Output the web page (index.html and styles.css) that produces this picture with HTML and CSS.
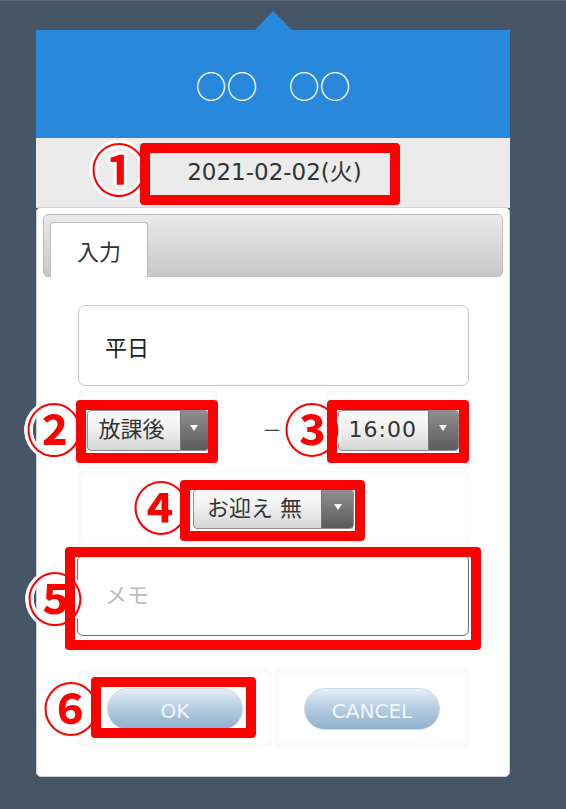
FILE: index.html
```html
<!DOCTYPE html>
<html lang="ja">
<head>
<meta charset="utf-8">
<title>入力</title>
<link rel="stylesheet" href="styles.css">
</head>
<body>
<div class="stage">
  <div class="page">
    <div class="pointer"></div>
    <div class="dialog">
      <div class="header">○○　○○</div>
      <div class="dateband"><span class="date">2021-02-02(火)</span></div>
      <div class="card">
        <div class="tabbar"><div class="tab">入力</div></div>
        <div class="form">
          <div class="dayfield">平日</div>
          <div class="timerow">
            <div class="cell">
              <div class="select s-period"><span class="select-label">放課後</span><span class="select-arrow"></span></div>
            </div>
            <div class="cell cell-mid"><span class="dash">－</span></div>
            <div class="cell">
              <div class="select s-time"><span class="select-label">16:00</span><span class="select-arrow"></span></div>
            </div>
          </div>
          <div class="pickuprow">
            <div class="select s-pickup"><span class="select-label">お迎え 無</span><span class="select-arrow"></span></div>
          </div>
          <div class="memo"><span class="placeholder">メモ</span></div>
          <div class="btnrow">
            <div class="cell"><button class="btn">OK</button></div>
            <div class="cell"><button class="btn">CANCEL</button></div>
          </div>
        </div>
      </div>
    </div>
  </div>
  <div class="annotations">
    <span class="badge b1">①</span>
    <span class="badge b2">②</span>
    <span class="badge b3">③</span>
    <span class="badge b4">④</span>
    <span class="badge b5">⑤</span>
    <span class="badge b6">⑥</span>
    <div class="mark m1"></div>
    <div class="mark m2"></div>
    <div class="mark m3"></div>
    <div class="mark m4"></div>
    <div class="mark m5"></div>
    <div class="mark m6"></div>
  </div>
</div>
</body>
</html>
```

FILE: styles.css
```css
* { box-sizing: border-box; }

html, body {
  margin: 0;
  padding: 0;
  background: #475667;
}

body {
  font-family: "DejaVu Sans", "Noto Sans CJK JP", sans-serif;
  color: #333;
}

.stage {
  position: relative;
  width: 566px;
  height: 809px;
  overflow: hidden;
  border-top: 1px solid #5c6876;
}

.page {
  padding-top: 10px;
  padding-left: 36px;
  width: 510px;
}

.pointer {
  width: 0;
  height: 0;
  margin-left: 219px;
  border-left: 18px solid transparent;
  border-right: 19px solid transparent;
  border-bottom: 19px solid #2888dc;
}

.dialog {
  width: 474px;
}

.header {
  height: 108px;
  background: #2888dc;
  color: #fff;
  display: flex;
  align-items: center;
  justify-content: center;
  font-family: "Noto Sans CJK JP", sans-serif;
  font-size: 31px;
  line-height: 1;
}

.dateband {
  height: 70px;
  background: #ebebeb;
  display: flex;
  align-items: center;
  justify-content: center;
  border-bottom: 1px solid #dedede;
}

.date {
  font-size: 23px;
  line-height: 1;
  color: #333;
  padding-left: 3px;
}

.card {
  background: #fff;
  border: 1px solid #d2d2d2;
  border-radius: 5px;
  padding: 6px;
  margin-top: -1px;
}

.tabbar {
  height: 63px;
  border: 1px solid #bdbdbd;
  border-radius: 5px;
  background: linear-gradient(#e9e9e9, #c8c8c8);
  display: flex;
  align-items: flex-end;
  padding-left: 6px;
}

.tab {
  width: 98px;
  height: 55px;
  margin-bottom: -1px;
  background: #fff;
  border: 1px solid #bdbdbd;
  border-bottom: none;
  border-radius: 4px 4px 0 0;
  display: flex;
  align-items: center;
  justify-content: center;
  font-size: 22px;
  color: #333;
}

.form {
  padding: 28px 34px 23px 35px;
}

.dayfield {
  height: 81px;
  border: 1px solid #cacaca;
  border-radius: 7px;
  box-shadow: inset 0 1px 3px rgba(0,0,0,0.06);
  display: flex;
  align-items: center;
  padding-left: 26px;
  font-size: 22px;
  color: #222;
}

.timerow {
  margin-top: 5px;
  height: 78px;
  display: grid;
  grid-template-columns: 139px 110px 142px;
}

.cell {
  display: flex;
  align-items: center;
  justify-content: center;
  border-radius: 4px;
  box-shadow: inset 0 0 7px rgba(0,0,0,0.06);
}

.cell-mid {
  box-shadow: none;
}

.dash {
  font-family: "Noto Sans CJK JP", sans-serif;
  font-size: 20px;
  color: #444;
  line-height: 1;
}

.pickuprow {
  margin-top: 2px;
  height: 76px;
  display: flex;
  align-items: center;
  justify-content: center;
  border-radius: 4px;
  box-shadow: inset 0 0 7px rgba(0,0,0,0.05);
}

.select {
  display: flex;
  height: 41px;
  border: 1px solid #8e8e8e;
  border-radius: 4px;
  overflow: hidden;
  background: linear-gradient(#fbfbfb, #f0f0f0 45%, #d6d6d6);
}

.select-label {
  flex: 1;
  display: flex;
  align-items: center;
  font-size: 22px;
  color: #333;
  line-height: 1;
  white-space: nowrap;
}

.select-arrow {
  position: relative;
  background: linear-gradient(#8f8f8f, #5b5b5b);
  border-left: 1px solid #777;
}

.select-arrow::after {
  content: "";
  position: absolute;
  left: 50%;
  top: 50%;
  margin-left: -4px;
  margin-top: -5px;
  border-left: 4px solid transparent;
  border-right: 4px solid transparent;
  border-top: 6px solid #fff;
}

.s-period { width: 122px; }
.s-period .select-label { padding-left: 11px; }
.s-period .select-arrow { width: 28px; }

.s-time { width: 121px; }
.s-time .select-label { padding-left: 10px; letter-spacing: 1px; }
.s-time .select-arrow { width: 30px; }

.s-pickup { width: 161px; height: 40px; }
.s-pickup .select-label { padding-left: 13px; }
.s-pickup .select-arrow { width: 32px; }

.memo {
  margin-top: 8px;
  height: 81px;
  border: 1.5px solid #707070;
  border-radius: 6px;
  box-shadow: inset 0 1px 3px rgba(0,0,0,0.08);
  display: flex;
  align-items: center;
  padding-left: 27px;
  margin-left: -1px;
}

.placeholder {
  font-size: 22px;
  color: #bdbdbd;
  line-height: 1;
}

.btnrow {
  margin-top: 33px;
  height: 78px;
  display: grid;
  grid-template-columns: 194px 194px;
  column-gap: 3px;
}

.btnrow .cell {
  border-radius: 6px;
  box-shadow: inset 0 0 8px rgba(0,0,0,0.06);
}

.btn {
  width: 136px;
  height: 42px;
  margin-top: 2px;
  border-radius: 21px;
  border: 1px solid #c9d9e8;
  background: linear-gradient(#e6eff8 0%, #bcd2e6 40%, #8eafcc 100%);
  color: #f2f6fa;
  font-family: "DejaVu Sans", sans-serif;
  font-size: 20px;
  line-height: 1;
  padding: 4px 0 0;
}

.annotations {
  position: absolute;
  inset: 0;
  pointer-events: none;
}

.badge {
  position: absolute;
  width: 56px;
  height: 56px;
  font-family: "Noto Sans CJK JP", sans-serif;
  font-weight: 700;
  font-size: 56px;
  line-height: 1;
  text-align: center;
  color: #ff0000;
  text-shadow:
    3px 0 0 #fff, -3px 0 0 #fff, 0 3px 0 #fff, 0 -3px 0 #fff,
    2px 2px 0 #fff, -2px 2px 0 #fff, 2px -2px 0 #fff, -2px -2px 0 #fff,
    1px 3px 0 #fff, -1px 3px 0 #fff, 1px -3px 0 #fff, -1px -3px 0 #fff,
    3px 1px 0 #fff, -3px 1px 0 #fff, 3px -1px 0 #fff, -3px -1px 0 #fff;
}

.b1 { left: 91px; top: 138px; }
.b2 { left: 26px; top: 398px; }
.b3 { left: 284px; top: 398px; }
.b4 { left: 133px; top: 476px; }
.b5 { left: 27px; top: 567px; }
.b6 { left: 43px; top: 677px; }

.mark {
  position: absolute;
  border: 10px solid #ff0000;
  border-radius: 4px;
}

.m1 { left: 140px; top: 142px; width: 260px; height: 62px; }
.m2 { left: 76px; top: 399px; width: 142px; height: 63px; }
.m3 { left: 327px; top: 399px; width: 142px; height: 63px; }
.m4 { left: 180px; top: 479px; width: 185px; height: 61px; }
.m5 { left: 65px; top: 546px; width: 416px; height: 103px; }
.m6 { left: 91px; top: 676px; width: 165px; height: 61px; }
```
